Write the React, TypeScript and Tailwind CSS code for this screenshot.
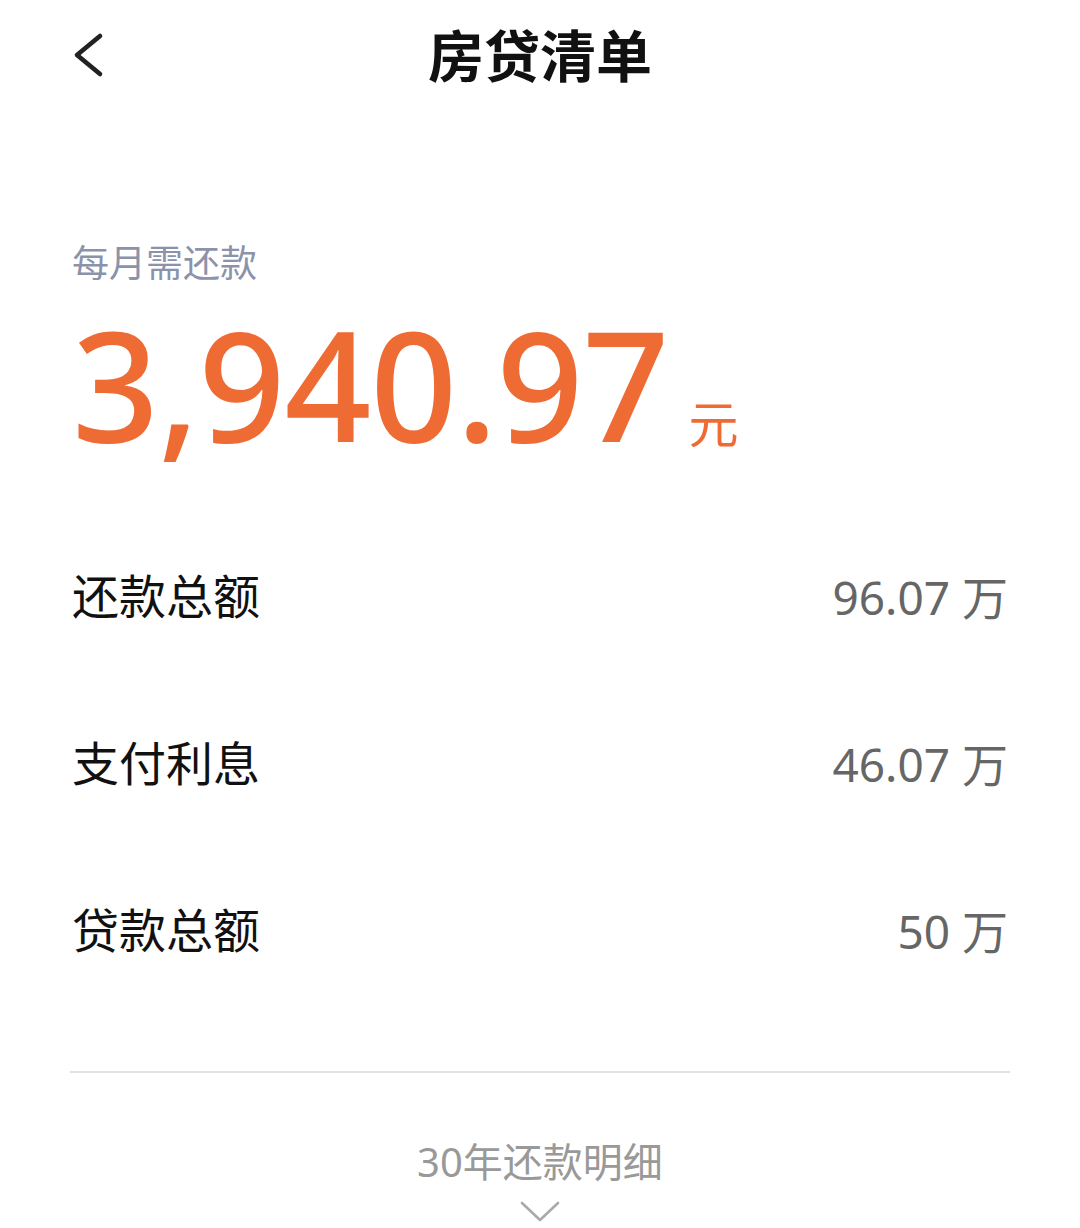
const font = { fontFamily: '"Noto Sans", "Noto Sans CJK SC", sans-serif' }

const rows = [
  { label: '还款总额', value: '96.07' },
  { label: '支付利息', value: '46.07' },
  { label: '贷款总额', value: '50' },
]

export default function App() {
  return (
    <div className="w-[1080px] h-[1228px] bg-white overflow-hidden" style={font}>
      <div className="relative h-[112px] flex items-center justify-center">
        <svg className="absolute left-[70px] top-[30px]" width="40" height="50" viewBox="0 0 40 50" fill="none">
          <polyline points="30,6 7,25 30,44" stroke="#222" strokeWidth="4.6" strokeLinecap="round" strokeLinejoin="round" />
        </svg>
        <h1 className="text-[56px] font-bold text-[#111] leading-none -mt-[2px]">房贷清单</h1>
      </div>

      <div className="px-[72px]">
        <p className="mt-[132px] text-[37px] leading-[37px] text-[#8b93ab]">每月需还款</p>
        <div className="mt-[43px] flex items-end text-[#ef6b34]">
          <span className="text-[152px] leading-[120px] tracking-[-1px] font-medium">3,940.97</span>
          <span className="ml-[20px] mb-[-5px] text-[50px] leading-none">元</span>
        </div>

        <div className="mt-[69px]">
          {rows.map(r => (
            <div key={r.label} className="h-[167px] flex items-center justify-between">
              <span className="text-[47px] text-[#111] leading-none">{r.label}</span>
              <span className="text-[46px] text-[#666] leading-none">{r.value} 万</span>
            </div>
          ))}
        </div>
      </div>

      <div className="mx-[70px] mt-[57px] h-[2px] bg-[#e2e2e2]" />

      <div className="flex flex-col items-center mt-[69px]">
        <span className="text-[40px] text-[#999] leading-none">30年还款明细</span>
        <svg className="mt-[18px]" width="42" height="24" viewBox="0 0 42 24" fill="none">
          <polyline points="3,3 21,20 39,3" stroke="#aaa" strokeWidth="2.6" strokeLinecap="round" strokeLinejoin="round" />
        </svg>
      </div>
    </div>
  )
}
